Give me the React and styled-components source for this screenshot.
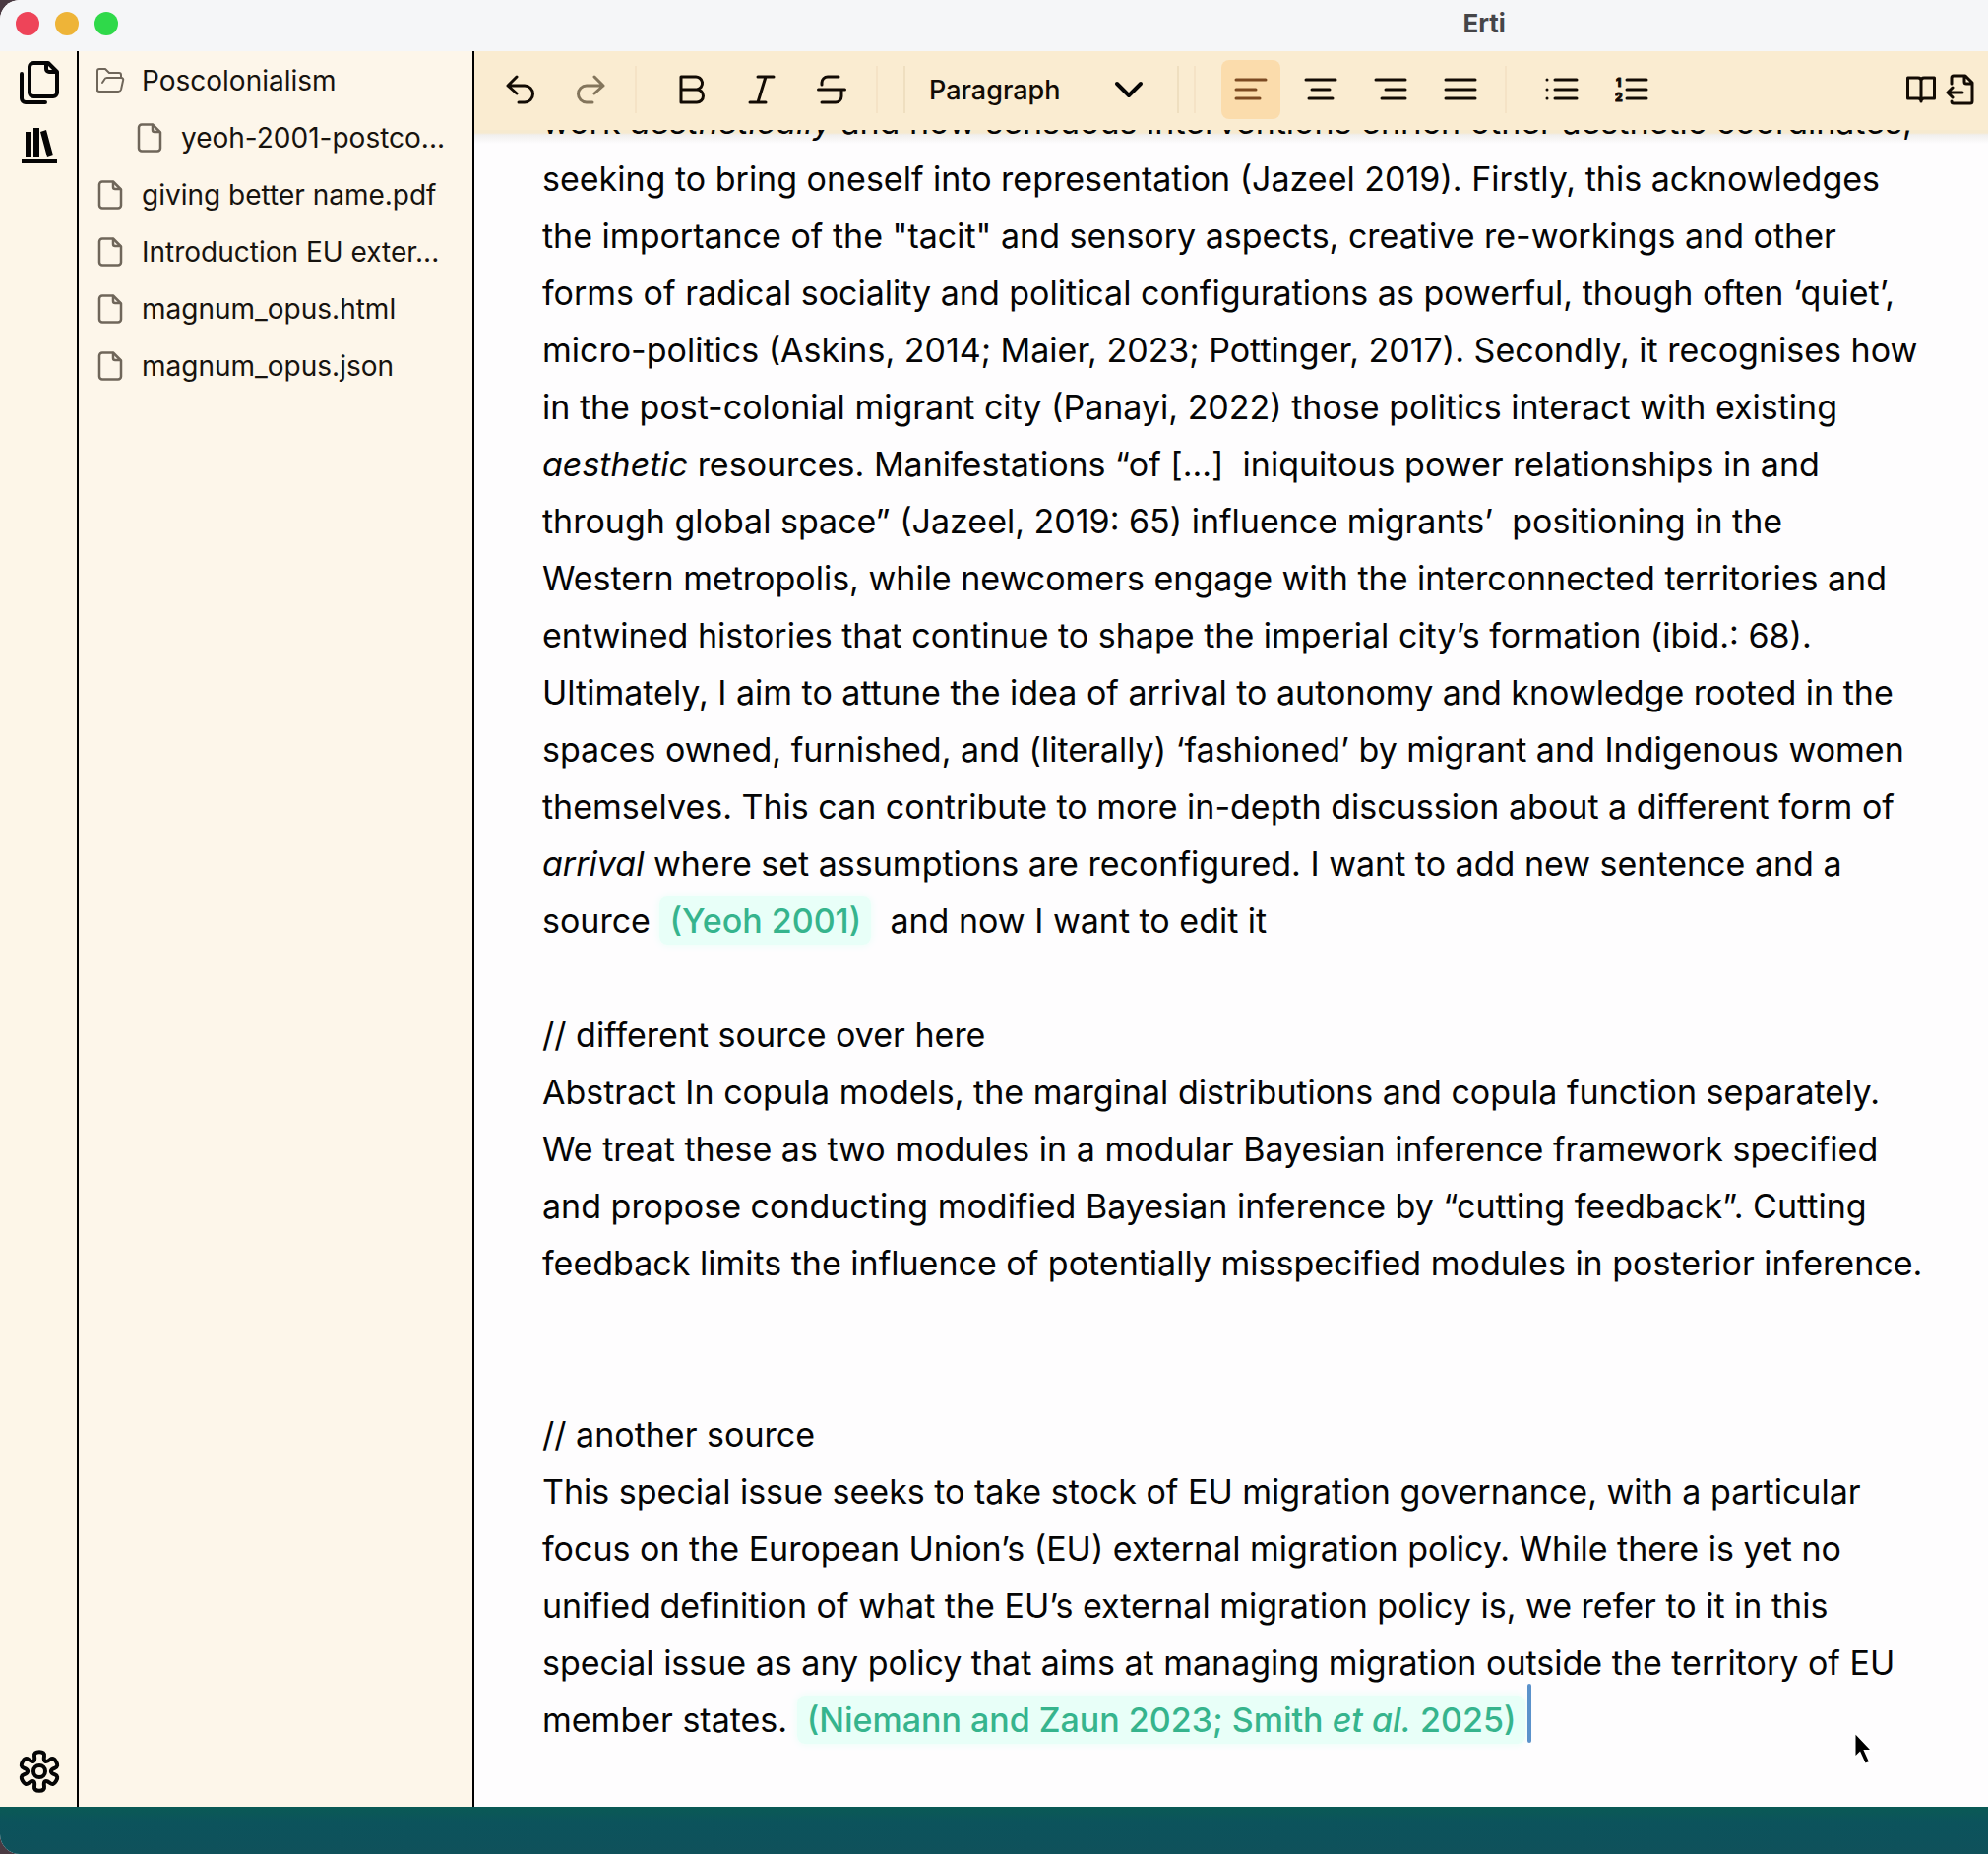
import React from "react";
import styled, { createGlobalStyle } from "styled-components";

const GlobalStyle = createGlobalStyle`
  * { box-sizing: border-box; }
  html, body { margin: 0; background: #4a3a42; }
  button, select { font: inherit; color: inherit; }
`;

const Window = styled.div`
  position: relative;
  display: grid;
  grid-template-rows: 52px minmax(0, 1fr) 48px;
  height: 100vh;
  overflow: hidden;
  border-radius: 20px 0 0 20px;
  background: #fefdfe;
  color: #050505;
  font-family: Inter, "Liberation Sans", sans-serif;
`;

const TitleBar = styled.header`
  display: grid;
  grid-template-columns: 3fr auto 1fr;
  align-items: center;
  padding: 0 0 4px 16px;
  background: #f5f6f8;
`;

const Lights = styled.div`
  display: flex;
  gap: 16px;
`;

const Light = styled.button`
  width: 24px;
  height: 24px;
  padding: 0;
  border: 0;
  border-radius: 50%;
  background: ${(p) => p.$color};
`;

const Title = styled.h1`
  margin: 0;
  font-size: 26px;
  line-height: 32px;
  font-weight: 700;
  color: #454548;
`;

const Body = styled.div`
  display: grid;
  grid-template-columns: 80px 402px minmax(0, 1fr);
  min-height: 0;
`;

const Rail = styled.nav`
  display: flex;
  flex-direction: column;
  align-items: center;
  gap: 16px;
  padding: 8px 0 12px 2px;
  border-right: 2px solid #000;
  background: #fdf6e8;
`;

const RailButton = styled.button`
  display: grid;
  place-items: center;
  width: 48px;
  height: 48px;
  padding: 0;
  border: 0;
  background: none;
  margin-top: ${(p) => (p.$last ? "auto" : 0)};
`;

const Tree = styled.ul`
  margin: 0;
  padding: 1px 17px;
  list-style: none;
  border-right: 2px solid #000;
  background: #fdf6ea;
  font-size: 28px;
  line-height: 58px;
  color: #17130e;
`;

const TreeButton = styled.button`
  display: flex;
  align-items: center;
  gap: 17px;
  width: 100%;
  height: 58px;
  padding: 0 0 0 ${(p) => (p.$nested ? 40 : 0)}px;
  border: 0;
  background: none;
  text-align: left;
  white-space: nowrap;

  svg { flex: none; }
`;

const Editor = styled.main`
  display: grid;
  grid-template-rows: 80px minmax(0, 1fr);
  min-width: 0;
`;

const Toolbar = styled.div`
  display: flex;
  align-items: center;
  padding: 0 8px 2px 17px;
  background: #faecd1;
`;

const Group = styled.div`
  display: flex;
  gap: ${(p) => (p.$tight ? 0 : 11)}px;
  margin-left: ${(p) => (p.$end ? "auto" : 0)};
`;

const ToolButton = styled.button`
  display: grid;
  place-items: center;
  width: ${(p) => (p.$narrow ? 40 : 60)}px;
  height: 60px;
  padding: 0;
  border: 0;
  border-radius: 8px;
  background: ${(p) => (p.$active ? "#fbdcac" : "none")};
  color: ${(p) => (p.$active ? "#7c4a22" : p.disabled ? "#83755c" : "#120b04")};
`;

const Divider = styled.span`
  width: 2px;
  height: 48px;
  margin: 0 26px 0 15px;
  background: #f5e3c6;
`;

const SelectBox = styled.label`
  display: grid;
  align-items: center;
  width: 280px;
  height: 48px;
  border: solid #efdfc0;
  border-width: 0 2px;

  > * { grid-area: 1 / 1; }
  svg { justify-self: end; margin-right: 34px; pointer-events: none; }
`;

const Select = styled.select`
  width: 100%;
  height: 48px;
  padding: 0 64px 0 24px;
  border: 0;
  appearance: none;
  background: none;
  font-size: 27px;
  font-weight: 500;
  color: #120b04;
`;

const Page = styled.div`
  overflow: hidden;
  padding-left: 69px;
  background: linear-gradient(#f6ead0 0, #f6ead0 3px, #f0efee 5px, #fefdfe 14px);
`;

const Doc = styled.article`
  margin-top: -37px;
  font-size: 34px;
  line-height: 58px;
  white-space: pre;

  p { margin: 0; min-height: 58px; }
`;

const Cite = styled.a`
  padding: 4px 10px;
  border-radius: 8px;
  background: #e8fff8;
  box-shadow: 0 0 8px #e8fff8;
  color: #36b48d;
  font-weight: 500;
  text-decoration: none;
`;

const Caret = styled.span`
  display: inline-block;
  vertical-align: top;
  width: 4px;
  height: 60px;
  margin: -8px 0 0 2px;
  border-radius: 2px;
  background: #5b92cb;
`;

const StatusBar = styled.footer`
  background: linear-gradient(#0a5a55, #0c535c 16px, #0f515b);
`;

const Pointer = styled.svg`
  position: absolute;
  right: 112px;
  bottom: 88px;
`;

const Svg = ({ w, h, sw = 3, children }) => (
  <svg
    width={w}
    height={h}
    viewBox={`0 0 ${w} ${h}`}
    fill="none"
    stroke="currentColor"
    strokeWidth={sw}
    strokeLinecap="round"
    strokeLinejoin="round"
    aria-hidden="true"
  >
    {children}
  </svg>
);

const polar = (r, deg) => {
  const a = (deg * Math.PI) / 180;
  return [22 + r * Math.cos(a), 22 + r * Math.sin(a)];
};
const gearPoints = Array.from({ length: 6 }, (_, k) => {
  const a = -90 + 60 * k;
  return [polar(20.5, a - 16), polar(20.5, a + 16), polar(12, a + 21), polar(12, a + 39)];
}).flat();
const gearPath =
  gearPoints
    .map((p, i) => {
      const n = gearPoints[(i + 1) % gearPoints.length];
      const mid = `${(p[0] + n[0]) / 2} ${(p[1] + n[1]) / 2}`;
      return i === 0 ? `M${mid}` : `Q${p[0]} ${p[1]} ${mid}`;
    })
    .join("") +
  `Q${gearPoints[0][0]} ${gearPoints[0][1]} ${(gearPoints[0][0] + gearPoints[1][0]) / 2} ${
    (gearPoints[0][1] + gearPoints[1][1]) / 2
  }Z`;

const FilesIcon = () => (
  <Svg w={40} h={44} sw={4}>
    <path d="M14 2h15l9 9v21a4 4 0 0 1-4 4H14a4 4 0 0 1-4-4V6a4 4 0 0 1 4-4z" />
    <path d="M27 3v5a3 3 0 0 0 3 3h7" />
    <path d="M2 13v25a4 4 0 0 0 4 4h20" />
  </Svg>
);

const LibraryIcon = () => (
  <svg width="36" height="36" viewBox="0 0 36 36" fill="currentColor" aria-hidden="true">
    <path d="M0 32h36v4H0zM4 4h6v26H4zM12 0h6v30h-6zM19 4l6-2 7 26-6 2z" />
  </svg>
);

const GearIcon = () => (
  <Svg w={44} h={44} sw={4}>
    <path d={gearPath} />
    <circle cx="22" cy="22" r="6" />
  </Svg>
);

const FolderIcon = () => (
  <Svg w={30} h={26} sw={2}>
    <path d="M2 23V3a2 2 0 0 1 2-2h6l4 4h10a2 2 0 0 1 2 2v3" />
    <path d="M7 15l2-3a3 3 0 0 1 3-2h14a2 2 0 0 1 2 3l-2 9a3 3 0 0 1-3 2H4a2 2 0 0 1-2-2" />
  </Svg>
);

const FileIcon = () => (
  <Svg w={30} h={30} sw={2.5}>
    <path d="M7 1.5h11l8 8v16a3 3 0 0 1-3 3H7a3 3 0 0 1-3-3v-21a3 3 0 0 1 3-3z" />
    <path d="M18 2v5a2 2 0 0 0 2 2h5" />
  </Svg>
);

const TreeIcon = styled.span`
  display: flex;
  width: 30px;
  color: #6f665a;
`;

const UndoIcon = () => (
  <Svg w={30} h={30}>
    <path d="M11 2L2 11l9 8M2 11h17a8.500 8.500 0 0 1 0 17H13" />
  </Svg>
);
const RedoIcon = () => (
  <Svg w={30} h={30}>
    <path d="M19 2l9 9-9 8M28 11H11a8.500 8.500 0 0 0 0 17h6" />
  </Svg>
);
const BoldIcon = () => (
  <Svg w={26} h={30}>
    <path d="M2 2h14a6 6 0 0 1 2 13H2zM2 15h16a6 6 0 0 1 0 13H2z" />
  </Svg>
);
const ItalicIcon = () => (
  <Svg w={28} h={30}>
    <path d="M10 2h16M2 28h16M18 2l-8 26" />
  </Svg>
);
const StrikeIcon = () => (
  <Svg w={30} h={30}>
    <path d="M22 2H11a6 6 0 0 0-6 6v2M1.500 15h27M25 15v7a6 6 0 0 1-6 6H5" />
  </Svg>
);
const Lines = ({ d }) => (
  <Svg w={34} h={24}>
    <path d={d} />
  </Svg>
);
const NumberedIcon = () => (
  <Svg w={34} h={26}>
    <path d="M12 3h20M12 13h20M12 22h20" />
    <g fill="currentColor" stroke="currentColor" strokeWidth="1" fontFamily="Inter, sans-serif" fontSize="12" fontWeight="800">
      <text x="1" y="10">1</text>
      <text x="0" y="25">2</text>
    </g>
  </Svg>
);
const BookIcon = () => (
  <Svg w={30} h={30} sw={3}>
    <path d="M1.500 3H12q3 0 3 3 0-3 3-3h10.500v21H18q-3 0-3 3 0-3-3-3H1.500zM15 6v21" />
  </Svg>
);
const ExportIcon = () => (
  <Svg w={30} h={32} sw={3}>
    <path d="M6 10V4a2 2 0 0 1 2-2h12l7 7v19a2 2 0 0 1-2 2H8a2 2 0 0 1-2-2M19 3v5a2 2 0 0 0 2 2h6" />
    <path d="M17 19H2M7 14l-5 5 5 5" />
  </Svg>
);

const files = [
  { name: "Poscolonialism", folder: true },
  { name: "yeoh-2001-postco...", nested: true },
  { name: "giving better name.pdf" },
  { name: "Introduction EU exter..." },
  { name: "magnum_opus.html" },
  { name: "magnum_opus.json" },
];

export default function App() {
  return (
    <>
      <GlobalStyle />
      <Window>
        <TitleBar>
          <Lights>
            <Light $color="#ee4459" aria-label="Close" />
            <Light $color="#eeb438" aria-label="Minimise" />
            <Light $color="#2fd94a" aria-label="Zoom" />
          </Lights>
          <Title>Erti</Title>
        </TitleBar>
        <Body>
          <Rail>
            <RailButton aria-label="Files"><FilesIcon /></RailButton>
            <RailButton aria-label="Library"><LibraryIcon /></RailButton>
            <RailButton $last aria-label="Settings"><GearIcon /></RailButton>
          </Rail>
          <Tree>
            {files.map((f) => (
              <li key={f.name}>
                <TreeButton $nested={f.nested}>
                  <TreeIcon>{f.folder ? <FolderIcon /> : <FileIcon />}</TreeIcon>
                  {f.name}
                </TreeButton>
              </li>
            ))}
          </Tree>
          <Editor>
            <Toolbar role="toolbar">
              <Group>
                <ToolButton aria-label="Undo"><UndoIcon /></ToolButton>
                <ToolButton aria-label="Redo" disabled><RedoIcon /></ToolButton>
              </Group>
              <Divider />
              <Group>
                <ToolButton aria-label="Bold"><BoldIcon /></ToolButton>
                <ToolButton aria-label="Italic"><ItalicIcon /></ToolButton>
                <ToolButton aria-label="Strikethrough"><StrikeIcon /></ToolButton>
              </Group>
              <Divider />
              <SelectBox>
                <Select aria-label="Block type" defaultValue="Paragraph">
                  <option>Paragraph</option>
                </Select>
                <Svg w={30} h={18} sw={4}><path d="M3 3l12 12L27 3" /></Svg>
              </SelectBox>
              <Divider />
              <Group>
                <ToolButton $active aria-label="Align left"><Lines d="M2 2h30M2 12h20M2 21h24" /></ToolButton>
                <ToolButton aria-label="Align centre"><Lines d="M2 2h30M8 12h18M5 21h24" /></ToolButton>
                <ToolButton aria-label="Align right"><Lines d="M2 2h30M12 12h20M8 21h24" /></ToolButton>
                <ToolButton aria-label="Justify"><Lines d="M2 2h30M2 12h30M2 21h30" /></ToolButton>
              </Group>
              <Divider />
              <Group>
                <ToolButton aria-label="Bulleted list"><Lines d="M10 2h22M10 12h22M10 21h22M2 2h0M2 12h0M2 21h0" /></ToolButton>
                <ToolButton aria-label="Numbered list"><NumberedIcon /></ToolButton>
              </Group>
              <Group $tight $end>
                <ToolButton $narrow aria-label="Read"><BookIcon /></ToolButton>
                <ToolButton $narrow aria-label="Export"><ExportIcon /></ToolButton>
              </Group>
            </Toolbar>
            <Page>
              <Doc>
                <p>
                  {"work "}<em>aesthetically</em>{" and how sensuous interventions enrich other aesthetic coordinates,\n"}
                  {"seeking to bring oneself into representation (Jazeel 2019). Firstly, this acknowledges\n"}
                  {"the importance of the \"tacit\" and sensory aspects, creative re-workings and other\n"}
                  {"forms of radical sociality and political configurations as powerful, though often ‘quiet’,\n"}
                  {"micro-politics (Askins, 2014; Maier, 2023; Pottinger, 2017). Secondly, it recognises how\n"}
                  {"in the post-colonial migrant city (Panayi, 2022) those politics interact with existing\n"}
                  <em>aesthetic</em>{" resources. Manifestations “of [...]  iniquitous power relationships in and\n"}
                  {"through global space” (Jazeel, 2019: 65) influence migrants’  positioning in the\n"}
                  {"Western metropolis, while newcomers engage with the interconnected territories and\n"}
                  {"entwined histories that continue to shape the imperial city’s formation (ibid.: 68).\n"}
                  {"Ultimately, I aim to attune the idea of arrival to autonomy and knowledge rooted in the\n"}
                  {"spaces owned, furnished, and (literally) ‘fashioned’ by migrant and Indigenous women\n"}
                  {"themselves. This can contribute to more in-depth discussion about a different form of\n"}
                  <em>arrival</em>{" where set assumptions are reconfigured. I want to add new sentence and a\n"}
                  {"source "}<Cite href="#yeoh-2001">(Yeoh 2001)</Cite>{"  and now I want to edit it"}
                </p>
                <p />
                <p>{"// different source over here"}</p>
                <p>
                  {"Abstract In copula models, the marginal distributions and copula function separately.\n"}
                  {"We treat these as two modules in a modular Bayesian inference framework specified\n"}
                  {"and propose conducting modified Bayesian inference by “cutting feedback”. Cutting\n"}
                  {"feedback limits the influence of potentially misspecified modules in posterior inference."}
                </p>
                <p />
                <p />
                <p>{"// another source"}</p>
                <p>
                  {"This special issue seeks to take stock of EU migration governance, with a particular\n"}
                  {"focus on the European Union’s (EU) external migration policy. While there is yet no\n"}
                  {"unified definition of what the EU’s external migration policy is, we refer to it in this\n"}
                  {"special issue as any policy that aims at managing migration outside the territory of EU\n"}
                  {"member states. "}
                  <Cite href="#niemann-2023">(Niemann and Zaun 2023; Smith <em>et al.</em> 2025)</Cite>
                  <Caret />
                </p>
              </Doc>
            </Page>
          </Editor>
        </Body>
        <StatusBar />
        <Pointer width="26" height="38" viewBox="0 0 24 36" aria-hidden="true">
          <path d="M2 2v25l5-5 5 11 5-2-5-11h7z" fill="#000" stroke="#fff" strokeWidth="2" />
        </Pointer>
      </Window>
    </>
  );
}
